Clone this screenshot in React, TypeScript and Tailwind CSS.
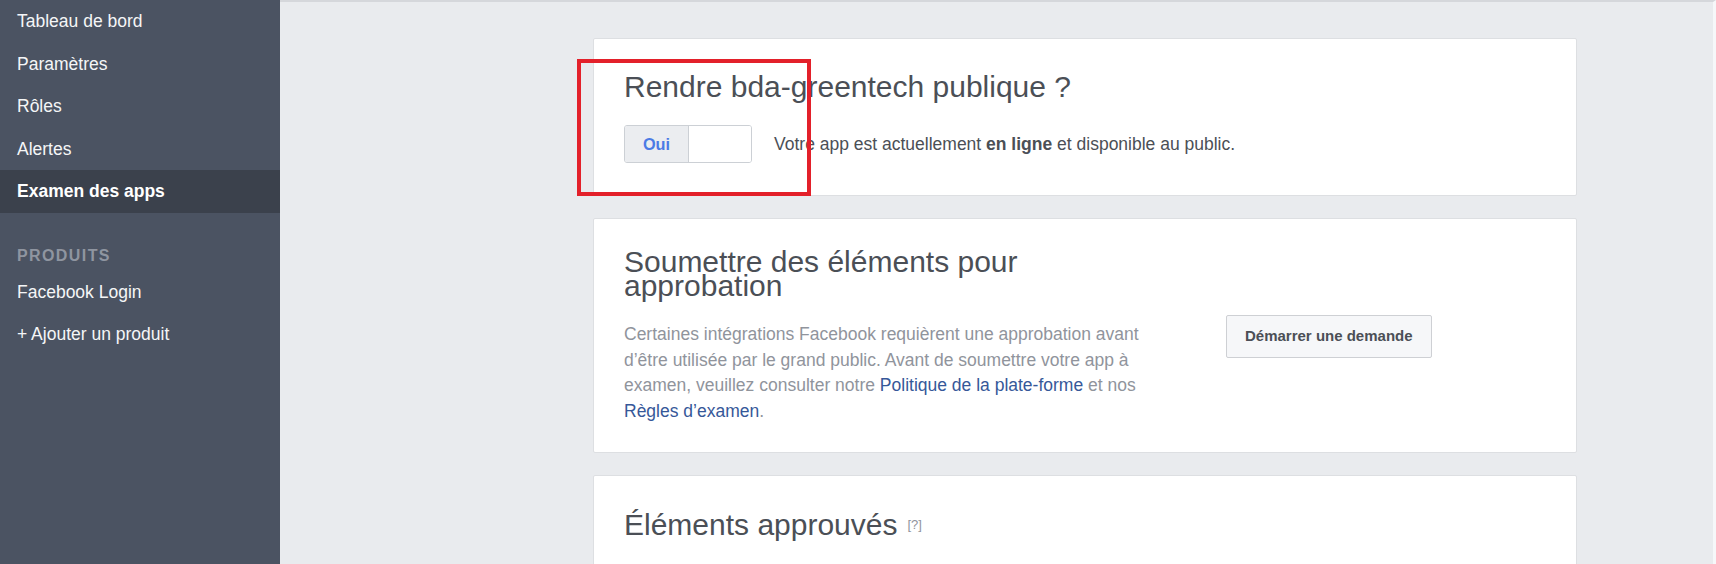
const sideItems = [
  { label: 'Tableau de bord' },
  { label: 'Paramètres' },
  { label: 'Rôles' },
  { label: 'Alertes' },
  { label: 'Examen des apps', active: true },
];

const productItems = ['Facebook Login', '+ Ajouter un produit'];

function SideLink({ label, active }: { label: string; active?: boolean }) {
  return (
    <div
      className={`h-[42.5px] pl-[17px] flex items-center text-[17.5px] ${
        active ? 'bg-[#3b414c] font-bold text-white' : 'text-[#f5f6f7]'
      }`}
    >
      {label}
    </div>
  );
}

export default function App() {
  return (
    <div
      className="relative flex h-[564px] w-full overflow-hidden bg-[#e9ebee]"
      style={{ fontFamily: '"Liberation Sans", Arial, sans-serif' }}
    >
      {/* Left navigation */}
      <aside className="w-[280px] shrink-0 bg-[#4b5362]">
        {sideItems.map((it) => (
          <SideLink key={it.label} label={it.label} active={it.active} />
        ))}
        <div className="pl-[17px] pt-[33px] pb-[5px] text-[16px] leading-[20px] font-bold tracking-[1.4px] text-[#8f95a0]">
          PRODUITS
        </div>
        {productItems.map((p) => (
          <SideLink key={p} label={p} />
        ))}
      </aside>

      {/* Main column */}
      <main className="flex-1 border-t-2 border-r-[3px] border-t-[#d5d7db] border-r-[#f6f7f9]">
        <div className="ml-[313px] w-[984px] pt-[36px] flex flex-col gap-[22px]">
          {/* Card 1 */}
          <section className="bg-white border border-[#dddfe2] rounded-[2px] pl-[30px] pt-[36px] pb-[32px]">
            <h2 className="text-[30px] leading-[24px] text-[#4b4f56]">Rendre bda-greentech publique ?</h2>
            <div className="mt-[26px] flex items-center">
              <div className="flex h-[38px] w-[128px] rounded-[3px] border border-[#ccd0d5] overflow-hidden">
                <div className="w-[64px] flex items-center justify-center bg-[#ebedf0] border-r border-[#ccd0d5] text-[16.25px] font-bold text-[#4b7be5]">
                  Oui
                </div>
                <div className="flex-1 bg-white" />
              </div>
              <p className="ml-[22px] text-[17.5px] text-[#4b4f56]">
                Votre app est actuellement <span className="font-bold">en ligne</span> et disponible au public.
              </p>
            </div>
          </section>

          {/* Card 2 */}
          <section className="bg-white border border-[#dddfe2] rounded-[2px] pl-[30px] pt-[31px] pb-[28px] flex items-center">
            <div className="w-[540px]">
              <h2 className="text-[30px] leading-[24px] text-[#4b4f56]">Soumettre des éléments pour approbation</h2>
              <p className="mt-[24px] text-[17.5px] leading-[25.5px] text-[#90949c]">
                Certaines intégrations Facebook requièrent une approbation avant d’être utilisée par le grand
                public. Avant de soumettre votre app à examen, veuillez consulter notre{' '}
                <a href="#" className="text-[#365899]">Politique de la plate-forme</a> et nos{' '}
                <a href="#" className="text-[#365899]">Règles d’examen</a>.
              </p>
            </div>
            <button
              type="button"
              className="ml-[62px] mb-[2px] h-[43px] px-[18px] rounded-[2px] border border-[#ced0d4] bg-[#f6f7f9] text-[15px] font-bold text-[#4b4f56]"
            >
              Démarrer une demande
            </button>
          </section>

          {/* Card 3 */}
          <section className="bg-white border border-[#dddfe2] rounded-[2px] pl-[30px] pt-[37px] h-[200px]">
            <div className="flex items-center">
              <h2 className="text-[30px] leading-[24px] text-[#4b4f56]">Éléments approuvés</h2>
              <span className="ml-[10px] text-[13px] leading-[16px] text-[#90949c]">[?]</span>
            </div>
          </section>
        </div>
      </main>

      {/* Red annotation frame */}
      <div className="absolute left-[577px] top-[59px] w-[234px] h-[137px] border-4 border-[#e3202a] pointer-events-none" />
    </div>
  );
}
